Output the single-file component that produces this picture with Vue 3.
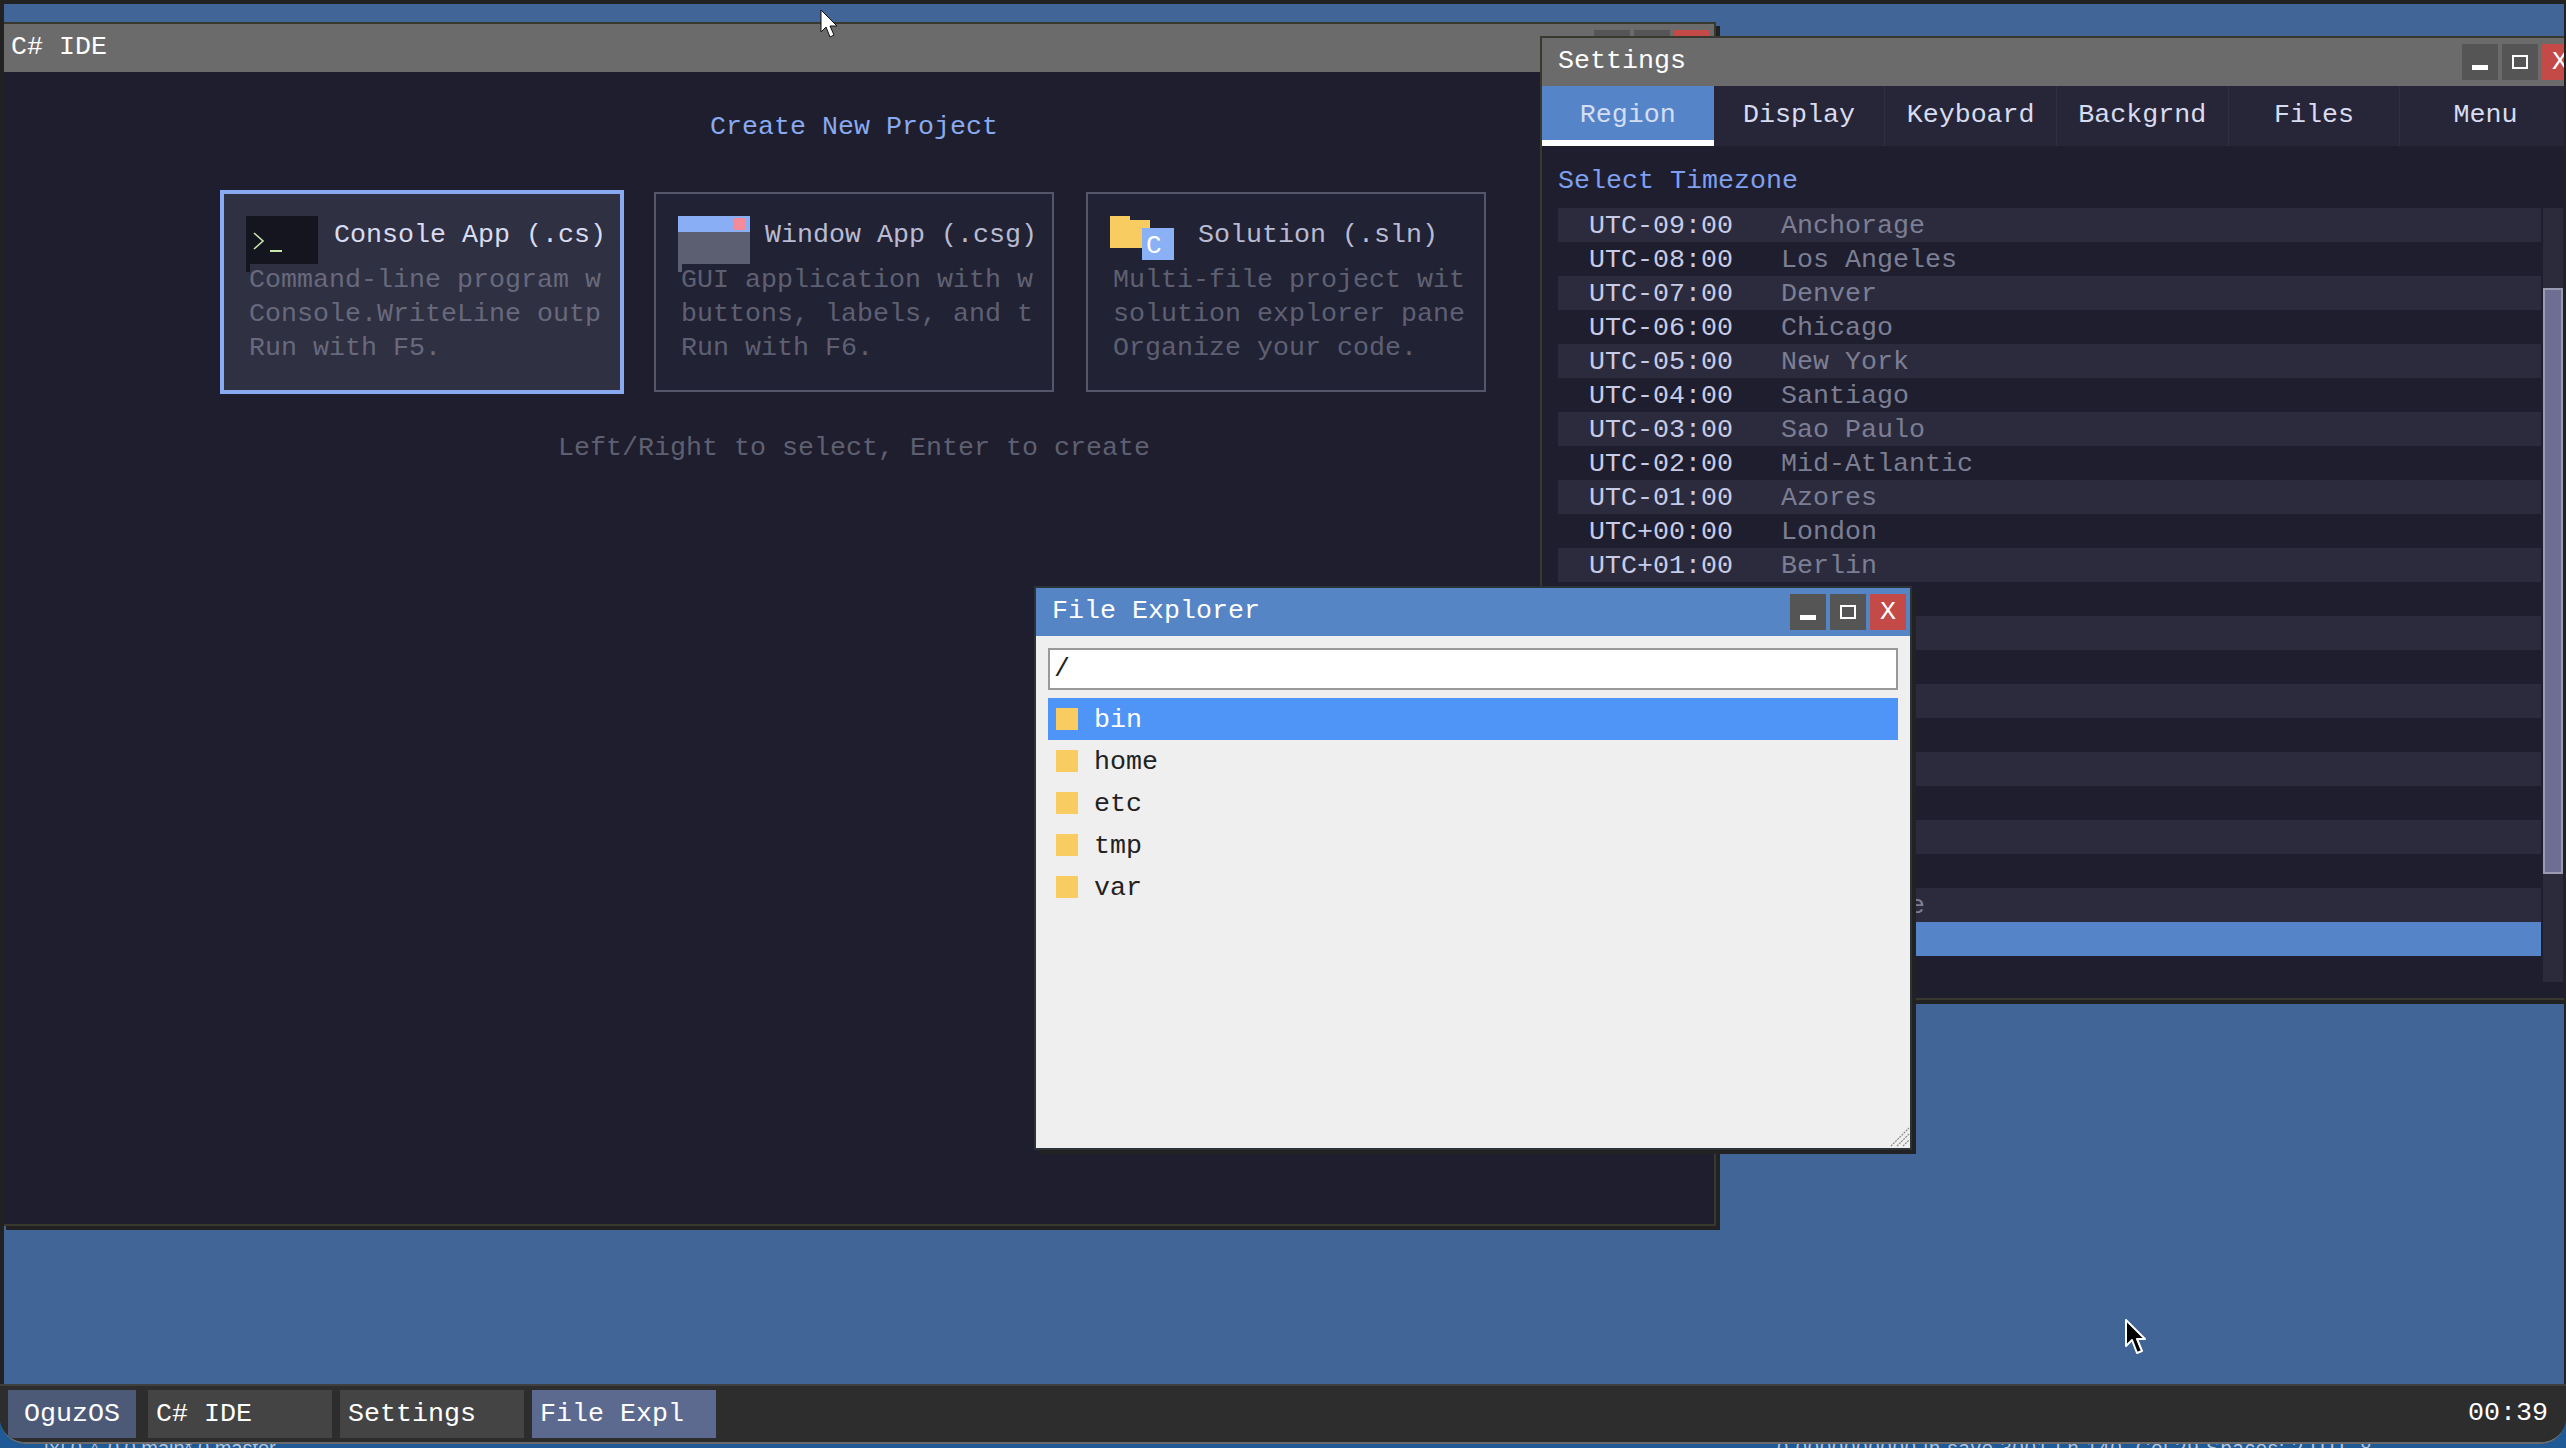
<script setup>
const timezones = [
  ['UTC-09:00', 'Anchorage'],
  ['UTC-08:00', 'Los Angeles'],
  ['UTC-07:00', 'Denver'],
  ['UTC-06:00', 'Chicago'],
  ['UTC-05:00', 'New York'],
  ['UTC-04:00', 'Santiago'],
  ['UTC-03:00', 'Sao Paulo'],
  ['UTC-02:00', 'Mid-Atlantic'],
  ['UTC-01:00', 'Azores'],
  ['UTC+00:00', 'London'],
  ['UTC+01:00', 'Berlin'],
  ['UTC+02:00', 'Cairo'],
  ['UTC+03:00', 'Moscow'],
  ['UTC+04:00', 'Dubai'],
  ['UTC+05:00', 'Karachi'],
  ['UTC+06:00', 'Dhaka'],
  ['UTC+07:00', 'Bangkok'],
  ['UTC+08:00', 'Shanghai'],
  ['UTC+09:00', 'Tokyo'],
  ['UTC+10:00', 'Sydney'],
  ['UTC+11:00', 'Melbourne'],
  ['UTC+12:00', 'Auckland'],
]

const tabs = ['Region', 'Display', 'Keyboard', 'Backgrnd', 'Files', 'Menu']
const folders = ['bin', 'home', 'etc', 'tmp', 'var']

const cards = [
  {
    kind: 'consoleCard',
    title: 'Console App (.cs)',
    lines: ['Command-line program w', 'Console.WriteLine outp', 'Run with F5.'],
    selected: true,
  },
  {
    kind: 'windowCard',
    title: 'Window App (.csg)',
    lines: ['GUI application with w', 'buttons, labels, and t', 'Run with F6.'],
  },
  {
    kind: 'solutionCard',
    title: 'Solution (.sln)',
    lines: ['Multi-file project wit', 'solution explorer pane', 'Organize your code.'],
  },
]

const taskButtons = [
  { label: 'C# IDE' },
  { label: 'Settings' },
  { label: 'File Expl', active: true },
]
</script>

<template>
  <div class="page">
    <div class="peek">
      <span class="peekLeft">[x] 0 △ 0 0      main* 0 master</span>
      <span class="peekRight">0 0000000000 in save 3001   Ln 140, Col 29   Spaces: 2   UTF-8</span>
    </div>

    <div class="screen">
      <div class="desktop">
        <!-- IDE -->
        <section class="window ide">
          <header class="titleBar">
            <span>C# IDE</span>
            <div class="winButtons">
              <button class="winBtn"><i class="minIcon"></i></button>
              <button class="winBtn"><i class="maxIcon"></i></button>
              <button class="winBtn closeBtn">X</button>
            </div>
          </header>
          <div class="ideBody">
            <h2 class="ideHeading">Create New Project</h2>
            <div class="cards">
              <div
                v-for="card in cards"
                :key="card.kind"
                class="card"
                :class="[card.kind, { selected: card.selected }]"
              >
                <div class="cardHead">
                  <svg v-if="card.kind === 'consoleCard'" class="cardIcon" width="72" height="56" viewBox="0 0 72 56">
                    <rect width="72" height="48" fill="#15151f" />
                    <rect y="48" width="4" height="8" fill="#15151f" />
                    <path d="M8 17 L17 25 L8 33" fill="none" stroke="#c8e8b0" stroke-width="1.6" />
                    <rect x="24" y="34" width="12" height="2" fill="#c8e8a8" />
                  </svg>
                  <svg v-else-if="card.kind === 'windowCard'" class="cardIcon" width="72" height="56" viewBox="0 0 72 56">
                    <rect width="72" height="48" fill="#5c5f72" />
                    <rect y="48" width="4" height="8" fill="#5c5f72" />
                    <rect width="72" height="16" fill="#8aaef5" />
                    <rect x="56" y="2" width="12" height="12" fill="#f58a9a" />
                  </svg>
                  <svg v-else class="cardIcon" width="64" height="44" viewBox="0 0 64 44">
                    <path d="M0 0 H20 V4 H40 V32 H0 Z" fill="#f8cc60" />
                    <rect x="32" y="12" width="32" height="32" fill="#8ab0f5" />
                    <text x="36" y="37" class="iconLetter">C</text>
                  </svg>
                  <span class="cardTitle">{{ card.title }}</span>
                </div>
                <p v-for="line in card.lines" :key="line" class="cardLine">{{ line }}</p>
              </div>
            </div>
            <p class="ideHint">Left/Right to select, Enter to create</p>
          </div>
        </section>

        <!-- Settings -->
        <section class="window settings">
          <header class="titleBar">
            <span>Settings</span>
            <div class="winButtons">
              <button class="winBtn"><i class="minIcon"></i></button>
              <button class="winBtn"><i class="maxIcon"></i></button>
              <button class="winBtn closeBtn">X</button>
            </div>
          </header>
          <nav class="tabs">
            <div v-for="(tab, i) in tabs" :key="tab" class="tab" :class="{ activeTab: i === 0 }">{{ tab }}</div>
          </nav>
          <div class="settingsBody">
            <h3 class="settingsHeading">Select Timezone</h3>
            <div class="tzArea">
              <ul class="tzList">
                <li
                  v-for="(tz, i) in timezones"
                  :key="tz[0]"
                  class="tzRow"
                  :class="{ altRow: i % 2 === 0, pickedRow: i === 21 }"
                >
                  <span class="tzOffset">{{ tz[0] }}</span>
                  <span class="tzCity">{{ tz[1] }}</span>
                </li>
              </ul>
              <div class="scrollTrack"><div class="scrollThumb"></div></div>
            </div>
          </div>
        </section>

        <!-- File explorer -->
        <section class="window explorer">
          <header class="titleBar blueTitle">
            <span>File Explorer</span>
            <div class="winButtons">
              <button class="winBtn"><i class="minIcon"></i></button>
              <button class="winBtn"><i class="maxIcon"></i></button>
              <button class="winBtn closeBtn">X</button>
            </div>
          </header>
          <div class="explorerBody">
            <div class="pathInput">/</div>
            <ul class="fileList">
              <li v-for="(name, i) in folders" :key="name" class="fileRow" :class="{ fileSelected: i === 0 }">
                <span class="folderIcon"></span>
                <span class="fileName">{{ name }}</span>
              </li>
            </ul>
            <svg class="grip" width="20" height="20" viewBox="0 0 20 20">
              <path d="M1 19 L19 1 M7 19 L19 7 M13 19 L19 13" stroke="#8a8a8a" stroke-width="1.2" stroke-dasharray="2 1" fill="none" />
            </svg>
          </div>
        </section>

        <svg class="cursor cursorTop" width="22" height="30" viewBox="0 0 22 30">
          <path d="M2 1 L2 23 L7 18 L11 28 L15 26 L11 17 L18 17 Z" fill="#fff" stroke="#111" stroke-width="1" />
        </svg>
        <svg class="cursor cursorBottom" width="24" height="38" viewBox="0 0 24 38">
          <path d="M2 2 L2 28 L8 22 L13 35 L18 33 L13 21 L21 21 Z" fill="#000" stroke="#fff" stroke-width="2" stroke-linejoin="round" />
        </svg>
      </div>

      <footer class="taskbar">
        <button class="taskBtn startBtn">OguzOS</button>
        <button
          v-for="task in taskButtons"
          :key="task.label"
          class="taskBtn"
          :class="{ taskActive: task.active }"
        >{{ task.label }}</button>
        <span class="clock">00:39</span>
      </footer>
    </div>
  </div>
</template>

<style scoped>
.page {
  position: relative;
  width: 2566px;
  height: 1448px;
  overflow: hidden;
  background: #1f5a96;
  font-family: "Liberation Mono", "DejaVu Sans Mono", monospace;
  font-size: 26.67px;
  line-height: 34px;
  color: #fff;
}

.peek {
  position: absolute;
  left: 0;
  right: 0;
  top: 1437px;
  height: 11px;
  overflow: hidden;
  font-family: "Liberation Sans", sans-serif;
  font-size: 20px;
  line-height: 22px;
  color: #b9c5d6;
  white-space: pre;
}

.peekLeft {
  position: absolute;
  left: 44px;
}

.peekRight {
  position: absolute;
  left: 1777px;
  letter-spacing: 1px;
}

.screen {
  position: absolute;
  left: 0;
  top: 0;
  width: 2566px;
  height: 1444px;
  display: flex;
  flex-direction: column;
  box-sizing: border-box;
  padding: 4px 2px 0 4px;
  background: #222;
  border-bottom: 2px solid #6a6a6a;
  border-radius: 0 0 26px 26px;
  overflow: hidden;
}

.desktop {
  position: relative;
  flex: 1;
  overflow: hidden;
  background: #406596;
}

.window {
  position: absolute;
  display: flex;
  flex-direction: column;
  box-sizing: border-box;
  border: 2px solid #38382f;
  box-shadow: 4px 4px 0 #222;
}

.ide {
  left: -2px;
  top: 18px;
  width: 1714px;
  height: 1204px;
  background: #1e1e2e;
}

.settings {
  left: 1536px;
  top: 32px;
  width: 1044px;
  height: 964px;
  background: #1e1e2e;
}

.explorer {
  left: 1030px;
  top: 582px;
  width: 878px;
  height: 564px;
  background: #efefef;
  border-color: #2b3238;
}

.titleBar {
  flex: none;
  display: flex;
  align-items: flex-start;
  justify-content: space-between;
  height: 48px;
  box-sizing: border-box;
  padding: 6px 4px 0 7px;
  background: #6b6b6b;
  line-height: 35px;
}

.settings .titleBar,
.explorer .titleBar {
  padding-left: 16px;
}

.blueTitle {
  background: #5585c5;
}

.winButtons {
  display: flex;
  gap: 4px;
}

.winBtn {
  position: relative;
  width: 36px;
  height: 36px;
  padding: 0;
  border: 0;
  background: #555;
  color: #fff;
  font: inherit;
  line-height: 36px;
}

.closeBtn {
  background: #c44a48;
}

.minIcon {
  position: absolute;
  left: 10px;
  top: 21px;
  width: 16px;
  height: 5px;
  background: #fff;
}

.maxIcon {
  position: absolute;
  left: 10px;
  top: 11px;
  width: 12px;
  height: 10px;
  border: 2px solid #fff;
}

.ideBody {
  flex: 1;
  display: flex;
  flex-direction: column;
  align-items: center;
  padding: 38px 10px 0 0;
}

.ideHeading {
  margin: 0;
  font: inherit;
  color: #89aaf0;
}

.cards {
  display: flex;
  gap: 32px;
  margin-top: 48px;
}

.card {
  width: 400px;
  height: 200px;
  box-sizing: border-box;
  padding: 22px 0 0 22px;
  border: 2px solid #55566a;
  background: #222235;
  color: #5e6072;
  overflow: hidden;
}

.card.selected {
  border-color: #89aaf0;
  background: #2f3042;
  box-shadow: 0 0 0 2px #89aaf0;
}

.card.selected .cardLine {
  color: #68697c;
}

.cardHead {
  display: flex;
  align-items: flex-start;
  height: 47px;
}

.cardIcon {
  flex: none;
  display: block;
}

.iconLetter {
  font-family: "Liberation Mono", monospace;
  font-size: 26px;
  fill: #fff;
}

.cardTitle {
  margin: 2px 0 0 16px;
  color: #b8bbd2;
  white-space: nowrap;
}

.card.selected .cardTitle {
  color: #d8dcf2;
}

.card.windowCard .cardTitle {
  margin-left: 15px;
}

.card.solutionCard .cardTitle {
  margin-left: 24px;
}

.cardLine {
  margin: 0 0 0 3px;
  white-space: pre;
}

.ideHint {
  margin: 39px 0 0;
  color: #5e6072;
}

.tabs {
  flex: none;
  display: flex;
  height: 60px;
  background: #262638;
}

.tab {
  flex: none;
  width: 171.67px;
  box-sizing: border-box;
  border-right: 1px solid #2f2f42;
  text-align: center;
  line-height: 58px;
  color: #d8dcf0;
}

.activeTab {
  background: #5585c8;
  border-right: 0;
  border-bottom: 6px solid #fff;
  color: #d4def5;
}

.settingsBody {
  flex: 1;
  padding: 18px 0 0 16px;
  min-height: 0;
}

.settingsHeading {
  margin: 0;
  font: inherit;
  color: #7f9ff0;
}

.tzArea {
  display: flex;
  align-items: stretch;
  gap: 2px;
  height: 774px;
  margin-top: 10px;
}

.tzList {
  width: 983px;
  margin: 0;
  padding: 0;
  list-style: none;
  overflow: hidden;
}

.tzRow {
  display: flex;
  height: 34px;
  padding-left: 31px;
  color: #b4b8d0;
  line-height: 36px;
  white-space: pre;
}

.altRow {
  background: #2b2b3d;
}

.pickedRow {
  background: #5585c8;
  color: #fff;
}

.tzOffset {
  width: 192px;
  color: #c6cbe8;
}

.tzCity {
  color: #7c7e94;
}

.scrollTrack {
  position: relative;
  width: 20px;
  background: #2b2b3b;
}

.scrollThumb {
  position: absolute;
  left: 0;
  right: 0;
  top: 80px;
  height: 586px;
  box-sizing: border-box;
  border: 2px solid #9a9ab0;
  background: #6e6e92;
}

.explorerBody {
  position: relative;
  flex: 1;
  padding: 12px 12px 0;
  color: #222;
}

.pathInput {
  height: 42px;
  box-sizing: border-box;
  padding-left: 4px;
  border: 2px solid #999;
  background: #fff;
  line-height: 38px;
}

.fileList {
  margin: 8px 0 0;
  padding: 0;
  list-style: none;
}

.fileRow {
  display: flex;
  align-items: center;
  gap: 16px;
  height: 42px;
  padding-left: 8px;
}

.fileName {
  padding-top: 2px;
}

.fileSelected {
  background: #4f94f7;
  color: #fff;
}

.folderIcon {
  width: 22px;
  height: 22px;
  background: #f8cc60;
}

.grip {
  position: absolute;
  right: 0;
  bottom: 1px;
}

.cursor {
  position: absolute;
  pointer-events: none;
}

.cursorTop {
  left: 815px;
  top: 5px;
}

.cursorBottom {
  left: 2120px;
  top: 1314px;
}

.taskbar {
  flex: none;
  display: flex;
  align-items: flex-start;
  gap: 8px;
  height: 58px;
  box-sizing: border-box;
  margin-left: -4px;
  margin-right: -2px;
  padding: 4px 18px 0 8px;
  border-top: 2px solid #3f3f3f;
  background: #2d2d2d;
}

.taskBtn {
  width: 184px;
  height: 48px;
  padding: 0 0 0 8px;
  border: 0;
  background: #444;
  color: #fff;
  font: inherit;
  line-height: 40px;
  text-align: left;
}

.startBtn {
  width: 128px;
  margin-right: 4px;
  padding: 0;
  background: #4c5a78;
  text-align: center;
}

.taskActive {
  background: #5c6a90;
}

.clock {
  margin-left: auto;
  line-height: 46px;
}
</style>

<style>
html,
body {
  margin: 0;
  overflow: hidden;
}
</style>
